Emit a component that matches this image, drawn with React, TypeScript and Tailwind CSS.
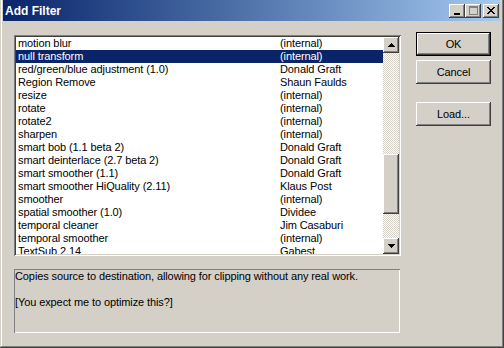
const filters: [string, string][] = [
  ["motion blur", "(internal)"],
  ["null transform", "(internal)"],
  ["red/green/blue adjustment (1.0)", "Donald Graft"],
  ["Region Remove", "Shaun Faulds"],
  ["resize", "(internal)"],
  ["rotate", "(internal)"],
  ["rotate2", "(internal)"],
  ["sharpen", "(internal)"],
  ["smart bob (1.1 beta 2)", "Donald Graft"],
  ["smart deinterlace (2.7 beta 2)", "Donald Graft"],
  ["smart smoother (1.1)", "Donald Graft"],
  ["smart smoother HiQuality (2.11)", "Klaus Post"],
  ["smoother", "(internal)"],
  ["spatial smoother (1.0)", "Dividee"],
  ["temporal cleaner", "Jim Casaburi"],
  ["temporal smoother", "(internal)"],
  ["TextSub 2.14", "Gabest"],
];

const raised =
  "shadow-[inset_-1px_-1px_#404040,inset_1px_1px_#ffffff,inset_-2px_-2px_#808080,inset_2px_2px_#d4d0c8]";

function CaptionButton({ children, className = "" }: { children: React.ReactNode; className?: string }) {
  return (
    <div className={`w-[16px] h-[14px] bg-[#d4d0c8] flex items-center justify-center ${raised} ${className}`}>
      {children}
    </div>
  );
}

function Arrow({ down }: { down?: boolean }) {
  return (
    <svg width="7" height="4" viewBox="0 0 7 4" shapeRendering="crispEdges">
      {down ? (
        <path d="M0 0h7v1H0zM1 1h5v1H1zM2 2h3v1H2zM3 3h1v1H3z" fill="#000" />
      ) : (
        <path d="M3 0h1v1H3zM2 1h3v1H2zM1 2h5v1H1zM0 3h7v1H0z" fill="#000" />
      )}
    </svg>
  );
}

function PushButton({ label, isDefault }: { label: string; isDefault?: boolean }) {
  return (
    <div
      className={`w-[75px] h-[24px] flex items-center justify-center bg-[#d4d0c8] text-black ${
        isDefault
          ? "shadow-[inset_0_0_0_1px_#000,inset_-2px_-2px_#404040,inset_2px_2px_#ffffff,inset_-3px_-3px_#808080]"
          : raised
      }`}
    >
      {label}
    </div>
  );
}

export default function App() {
  return (
    <div className="w-[504px] h-[348px] bg-[#d4d0c8] flex flex-col pl-[3px] pr-[4px] pb-[4px] shadow-[inset_-1px_-1px_#404040,inset_1px_0_#d4d0c8,inset_-2px_-2px_#808080,inset_2px_0_#ffffff] font-['Liberation_Sans',Arial,sans-serif] text-[11px] tracking-[-0.1px] text-black overflow-hidden">
      {/* caption */}
      <div className="h-[21px] shrink-0 flex items-center bg-linear-to-r from-[#0a246a] to-[#a6caf0] pl-[2px] pr-[1px]">
        <span className="font-bold text-white text-[12px] tracking-normal leading-none">Add Filter</span>
        <div className="ml-auto flex items-center">
          <CaptionButton>
            <svg width="8" height="9" viewBox="0 0 8 9" shapeRendering="crispEdges">
              <path d="M1 7h6v2H1z" fill="#000" />
            </svg>
          </CaptionButton>
          <CaptionButton>
            <svg width="9" height="9" viewBox="0 0 9 9" shapeRendering="crispEdges">
              <path d="M0 0h9v2H0zM0 2h1v7H0zM8 2h1v7H8zM1 8h7v1H1z" fill="#808080" />
            </svg>
          </CaptionButton>
          <CaptionButton className="ml-[2px]">
            <svg width="8" height="7" viewBox="0 0 8 7" shapeRendering="crispEdges">
              <path
                d="M0 0h2v1H0zM6 0h2v1H6zM1 1h2v1H1zM5 1h2v1H5zM2 2h4v1H2zM3 3h2v1H3zM2 4h4v1H2zM1 5h2v1H1zM5 5h2v1H5zM0 6h2v1H0zM6 6h2v1H6z"
                fill="#000"
              />
            </svg>
          </CaptionButton>
        </div>
      </div>

      <div className="flex pl-[11px] pt-[14px]">
        {/* left column */}
        <div className="flex flex-col w-[387px]">
          <div className="h-[221px] bg-white p-[2px] flex shadow-[inset_1px_1px_#808080,inset_-1px_-1px_#ffffff,inset_2px_2px_#404040,inset_-2px_-2px_#d4d0c8]">
            <div className="flex-1 overflow-hidden">
              {filters.map(([name, author], i) => (
                <div
                  key={name}
                  className={`grid grid-cols-[262px_1fr] h-[13px] leading-[12px] pl-[2px] whitespace-nowrap ${
                    i === 1 ? "bg-[#0a246a] text-white" : ""
                  }`}
                >
                  <span>{name}</span>
                  <span>{author}</span>
                </div>
              ))}
            </div>
            <div className="w-[16px] flex flex-col bg-[image:repeating-conic-gradient(#ffffff_0_25%,#d4d0c8_0_50%)] bg-[length:2px_2px]">
              <div className={`h-[16px] bg-[#d4d0c8] flex items-center justify-center ${raised}`}>
                <Arrow />
              </div>
              <div className="h-[101px]" />
              <div className={`h-[60px] bg-[#d4d0c8] ${raised}`} />
              <div className="flex-1" />
              <div className={`h-[16px] bg-[#d4d0c8] flex items-center justify-center ${raised}`}>
                <Arrow down />
              </div>
            </div>
          </div>

          <div className="mt-[13px] w-[386px] h-[64px] px-[1px] pt-[1px] leading-[13px] whitespace-pre-line shadow-[inset_1px_1px_#808080,inset_-1px_-1px_#ffffff]">
            {"Copies source to destination, allowing for clipping without any real work.\n\n[You expect me to optimize this?]"}
          </div>
        </div>

        {/* buttons */}
        <div className="flex flex-col ml-[15px] -mt-[3px]">
          <PushButton label="OK" isDefault />
          <div className="mt-[4px]">
            <PushButton label="Cancel" />
          </div>
          <div className="mt-[18px]">
            <PushButton label="Load..." />
          </div>
        </div>
      </div>
    </div>
  );
}
